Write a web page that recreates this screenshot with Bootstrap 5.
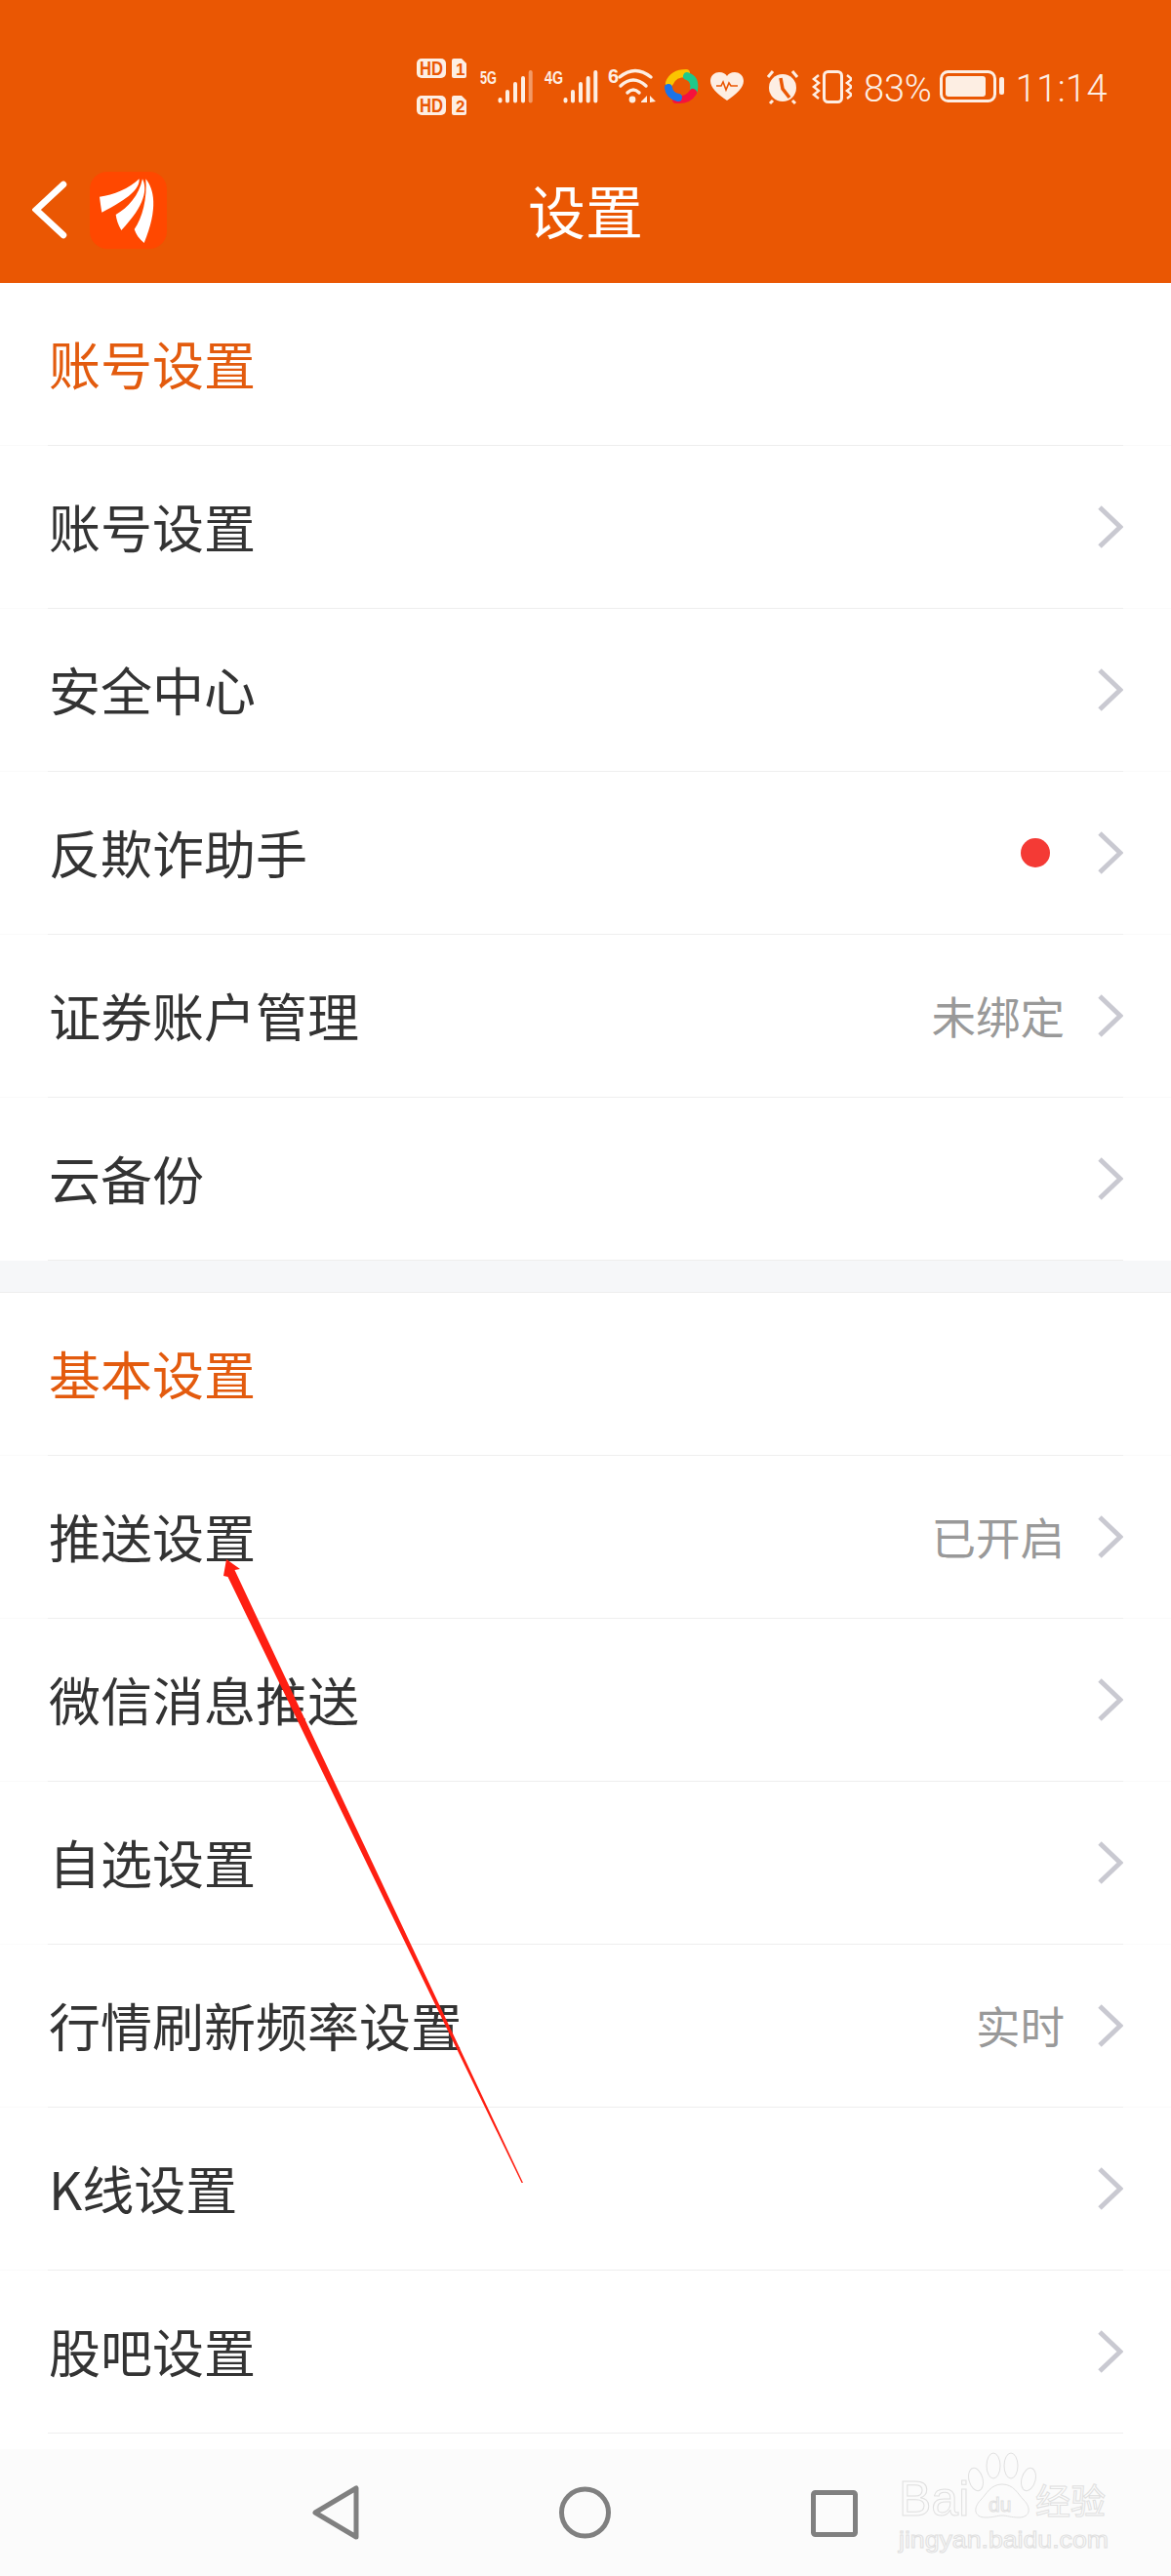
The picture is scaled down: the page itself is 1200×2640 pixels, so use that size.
<!DOCTYPE html>
<html lang="zh-CN">
<head>
<meta charset="utf-8">
<title>设置</title>
<link href="https://cdn.jsdelivr.net/npm/bootstrap@5.3.0/dist/css/bootstrap.min.css" rel="stylesheet">
<style>
html,body{margin:0;background:#fff}
body{width:1200px;height:2640px;position:relative;overflow:hidden;font-family:"Noto Sans CJK SC","Noto Sans",sans-serif;color:#333}
.app-head{height:290px;background:#ea5703;color:#fff}
.stat-bar{height:60px;margin-top:60px;position:absolute;top:0;left:0;right:65px;align-items:flex-start}
.stat-txt{font-family:Roboto,"Liberation Sans",sans-serif;font-weight:300;font-size:38px;line-height:1;color:#fdeee3;margin-top:12px;letter-spacing:-.2px}
.time-txt{letter-spacing:.4px;margin-left:12px}
.title-row{height:120px;position:absolute;top:155px;left:0;width:1200px;display:grid;grid-template-columns:1fr auto 1fr;align-items:center}
.title-txt{font-size:59px;line-height:1;color:#fff;margin-top:-2px}
.back-wrap{padding-left:33px;gap:23px}
.logo-box{width:79px;height:79px;border-radius:18px;background:#ff4800;display:block}
.set-row{height:167px;background:#fff;border:0;padding:0;border-radius:0!important;border-bottom:1px solid #fafafa}
.set-inner{height:167px;margin:0 49px;padding:0 0 0 1px;border-bottom:1px solid #eee}
.row-label{font-size:53px;line-height:1;color:#333;margin-top:-2px}
.head-label{font-size:53px;line-height:1;color:#e35b0e;margin-top:-2px}
.row-sub{font-size:45.500px;line-height:1;color:#999;margin-right:34px}
.row-dot{width:30px;height:30px;border-radius:50%;background:#f43a35;margin-right:49px}
.chev{width:26px;height:44px;display:block;flex:none}
.sect-gap{height:33px;background:#f6f7f9;border-bottom:1px solid #eee}
.foot-nav{position:absolute;left:0;right:0;top:2510px;height:130px;background:#fbfbfb}
.over-art{position:absolute;left:0;top:0;width:1200px;height:2640px;pointer-events:none}
</style>
</head>
<body>
<svg width="0" height="0" class="d-block" style="position:absolute"><defs>
<symbol id="chv" viewBox="0 0 26 44"><path d="M2 2 L23 22 L2 42" fill="none" stroke="#c9c9d1" stroke-width="5"/></symbol>
</defs></svg>

<header class="app-head position-relative">
  <div class="stat-bar d-flex justify-content-end">
    <svg width="446" height="58" viewBox="427 60 446 58" fill="#fdeee3">
      <rect x="427" y="60" width="30" height="20" rx="5"/>
      <text x="430" y="77" font-family="Liberation Sans Narrow,Liberation Sans,sans-serif" font-weight="700" font-size="20" textLength="24" lengthAdjust="spacingAndGlyphs" fill="#ea5703">HD</text>
      <path d="M465 60H473L478 65V78a2 2 0 0 1-2 2H465a2 2 0 0 1-2-2V62a2 2 0 0 1 2-2Z"/>
      <text x="467" y="77" font-family="Liberation Sans Narrow,Liberation Sans,sans-serif" font-weight="700" font-size="17" fill="#ea5703">1</text>
      <rect x="427" y="98" width="30" height="20" rx="5"/>
      <text x="430" y="115" font-family="Liberation Sans Narrow,Liberation Sans,sans-serif" font-weight="700" font-size="20" textLength="24" lengthAdjust="spacingAndGlyphs" fill="#ea5703">HD</text>
      <path d="M465 98H473L478 103V116a2 2 0 0 1-2 2H465a2 2 0 0 1-2-2V100a2 2 0 0 1 2-2Z"/>
      <text x="467" y="115" font-family="Liberation Sans Narrow,Liberation Sans,sans-serif" font-weight="700" font-size="17" fill="#ea5703">2</text>

      <text x="492" y="86" font-family="Liberation Sans Narrow,Liberation Sans,sans-serif" font-weight="700" font-size="19" textLength="17" lengthAdjust="spacingAndGlyphs">5G</text>
      <text x="558" y="86" font-family="Liberation Sans Narrow,Liberation Sans,sans-serif" font-weight="700" font-size="19" textLength="19" lengthAdjust="spacingAndGlyphs">4G</text>
      <text x="623" y="85" font-family="Liberation Sans Narrow,Liberation Sans,sans-serif" font-weight="700" font-size="20">6</text>
      <g stroke="#fdeee3" stroke-width="4" stroke-linecap="round" fill="none">
        <path d="M512.500 103.500V102M520 103.500V94M528 103.500V86M536 103.500V80"/>
        <path d="M543.700 103.500V74" stroke="#fdeee3" stroke-opacity=".45"/>
        <path d="M579.500 103.500V102M587 103.500V94M595 103.500V86M602.700 103.500V80M610.300 103.500V74"/>
      </g>
      <g stroke="#fdeee3" stroke-width="3.500" stroke-linecap="round" fill="none">
        <path d="M635 79Q651 66 667 79M636 88Q649 76 662 88M643 95Q649 89 655 95"/>
      </g>
      <circle cx="648" cy="102" r="3.400"/>
      <path d="M657 104L663 98V105H657ZM666 98L672 104L666 105Z"/>

      <g fill="none" stroke-width="8" stroke-linecap="round">
        <path d="M686 85Q690 75 703 75" stroke="#fbc400"/>
        <path d="M704 78Q713 81 711 92" stroke="#1ec98a"/>
        <path d="M710 95Q705 103 693 102" stroke="#f5123d"/>
        <path d="M685 90Q686 98 695 100" stroke="#1a73e8"/>
      </g>

      <path d="M745 103C735 96 728 90 728 83C728 77 733 74 737 74C741 74 744 76 745 78C746 76 749 74 753 74C757 74 762 77 762 83C762 90 755 96 745 103Z"/>
      <path d="M734 88H739L741 84L744 92L747 85L749 88H756" fill="none" stroke="#ea5703" stroke-width="1.600"/>

      <circle cx="802" cy="90" r="14"/>
      <path d="M800 80L802 91L809 100" fill="none" stroke="#ea5703" stroke-width="3.500"/>
      <path d="M787 79L792 73M817 79L812 73M792 103L789 106M812 103L815 106" fill="none" stroke="#fdeee3" stroke-width="3"/>

      <rect x="844.500" y="73.500" width="18" height="31" rx="4" fill="none" stroke="#fdeee3" stroke-width="3"/>
      <path d="M839 77L834 81L839 85L834 89L839 93L834 97L839 101M868 77L873 81L868 85L873 89L868 93L873 97L868 101" fill="none" stroke="#fdeee3" stroke-width="2.500"/>
    </svg>
    <span class="stat-txt ms-2 ps-1">83%</span>
    <svg class="ms-2" width="66" height="33" viewBox="961 72 66 33" style="margin-top:12px" fill="#fdeee3">
      <rect x="962.500" y="73.500" width="55" height="30" rx="7" fill="none" stroke="#fdeee3" stroke-width="3"/>
      <rect x="967" y="78" width="41" height="21" rx="3"/>
      <rect x="1022" y="79" width="5" height="18" rx="2"/>
    </svg>
    <span class="stat-txt time-txt">11:14</span>
  </div>

  <div class="title-row">
    <div class="back-wrap d-flex align-items-center">
      <svg width="36" height="60" viewBox="0 0 36 60"><path d="M32 4L4 30L32 56" fill="none" stroke="#fff" stroke-width="6.500" stroke-linecap="round" stroke-linejoin="miter"/></svg>
      <svg class="logo-box" viewBox="278 78 237 237">
        <path fill="#fff" d="M308 155C350 150 400 130 430 100C432 130 400 160 315 203C312 185 310 170 308 155Z"/>
        <path fill="#fff" d="M358 210C395 190 430 150 440 100C455 130 450 180 375 258C365 240 360 225 358 210Z"/>
        <path fill="#fff" d="M415 255C440 220 455 160 450 100C475 130 490 190 445 297C430 285 420 270 415 255Z"/>
      </svg>
    </div>
    <div class="title-txt">设置</div>
    <div></div>
  </div>
</header>

<main>
  <div class="list-group list-group-flush">
    <div class="list-group-item set-row"><div class="set-inner d-flex align-items-center"><span class="head-label">账号设置</span></div></div>
    <div class="list-group-item set-row"><div class="set-inner d-flex align-items-center justify-content-between"><span class="row-label">账号设置</span><svg class="chev"><use href="#chv"/></svg></div></div>
    <div class="list-group-item set-row"><div class="set-inner d-flex align-items-center justify-content-between"><span class="row-label">安全中心</span><svg class="chev"><use href="#chv"/></svg></div></div>
    <div class="list-group-item set-row"><div class="set-inner d-flex align-items-center"><span class="row-label me-auto">反欺诈助手</span><span class="row-dot"></span><svg class="chev"><use href="#chv"/></svg></div></div>
    <div class="list-group-item set-row"><div class="set-inner d-flex align-items-center"><span class="row-label me-auto">证券账户管理</span><span class="row-sub">未绑定</span><svg class="chev"><use href="#chv"/></svg></div></div>
    <div class="list-group-item set-row"><div class="set-inner d-flex align-items-center justify-content-between"><span class="row-label">云备份</span><svg class="chev"><use href="#chv"/></svg></div></div>
  </div>
  <div class="sect-gap"></div>
  <div class="list-group list-group-flush">
    <div class="list-group-item set-row"><div class="set-inner d-flex align-items-center"><span class="head-label">基本设置</span></div></div>
    <div class="list-group-item set-row"><div class="set-inner d-flex align-items-center"><span class="row-label me-auto">推送设置</span><span class="row-sub">已开启</span><svg class="chev"><use href="#chv"/></svg></div></div>
    <div class="list-group-item set-row"><div class="set-inner d-flex align-items-center justify-content-between"><span class="row-label">微信消息推送</span><svg class="chev"><use href="#chv"/></svg></div></div>
    <div class="list-group-item set-row"><div class="set-inner d-flex align-items-center justify-content-between"><span class="row-label">自选设置</span><svg class="chev"><use href="#chv"/></svg></div></div>
    <div class="list-group-item set-row"><div class="set-inner d-flex align-items-center"><span class="row-label me-auto">行情刷新频率设置</span><span class="row-sub">实时</span><svg class="chev"><use href="#chv"/></svg></div></div>
    <div class="list-group-item set-row"><div class="set-inner d-flex align-items-center justify-content-between"><span class="row-label">K线设置</span><svg class="chev"><use href="#chv"/></svg></div></div>
    <div class="list-group-item set-row"><div class="set-inner d-flex align-items-center justify-content-between"><span class="row-label">股吧设置</span><svg class="chev"><use href="#chv"/></svg></div></div>
  </div>
</main>

<nav class="foot-nav"></nav>

<svg class="over-art" viewBox="0 0 1200 2640">
  <path fill="#fe1f12" d="M232 1598L246 1608L240.500 1609L536 2237L534.500 2237L233.500 1616L229 1615Z"/>
  <g fill="none" stroke="#808080" stroke-width="5" stroke-linejoin="round">
    <path d="M365 2550V2600L323 2575Z"/>
    <circle cx="599.500" cy="2575" r="24"/>
    <rect x="833.500" y="2554.500" width="43" height="43" rx="2"/>
  </g>
  <g fill="#fbfbfb" stroke="#e0e0e0" stroke-width="1">
    <text x="921" y="2578" font-family="Liberation Sans,sans-serif" font-size="50">Bai</text>
    <ellipse cx="1000" cy="2541" rx="7" ry="12" transform="rotate(-15 1000 2541)"/>
    <ellipse cx="1018" cy="2527" rx="7" ry="13"/>
    <ellipse cx="1036" cy="2527" rx="7" ry="13"/>
    <ellipse cx="1054" cy="2541" rx="7" ry="12" transform="rotate(15 1054 2541)"/>
    <path d="M1027 2546C1015 2546 1011 2556 1005 2562C997 2570 998 2580 1010 2580C1018 2580 1022 2578 1027 2578C1032 2578 1036 2580 1044 2580C1056 2580 1057 2570 1049 2562C1043 2556 1039 2546 1027 2546Z"/>
    <text x="1013" y="2574" font-family="Liberation Sans,sans-serif" font-size="21">du</text>
    <text x="1061" y="2577" font-family="Noto Sans CJK SC,sans-serif" font-size="36">经验</text>
    <text x="921" y="2611" font-family="Liberation Sans,sans-serif" font-size="24" textLength="215" lengthAdjust="spacingAndGlyphs">jingyan.baidu.com</text>
  </g>
</svg>
<script src="https://cdn.jsdelivr.net/npm/bootstrap@5.3.0/dist/js/bootstrap.bundle.min.js"></script>
</body>
</html>
